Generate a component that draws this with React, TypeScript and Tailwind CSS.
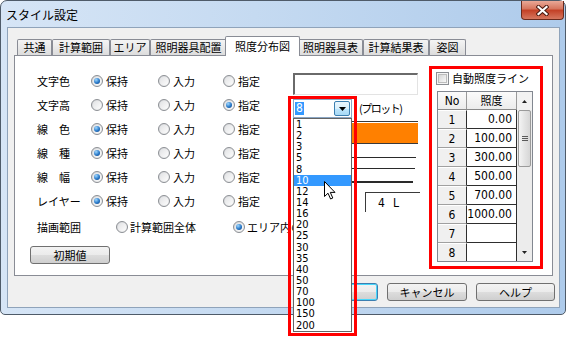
import React from "react";

const Radio = ({ on }: { on?: boolean }) => (
  <span className="relative inline-block w-[12px] h-[12px] shrink-0 rounded-full border border-[#8c8f94] bg-[linear-gradient(135deg,#d4d6d9,#f7f7f7)]">
    <span className="absolute inset-[1px] rounded-full bg-[linear-gradient(135deg,#e2e3e5,#fcfcfc)]" />
    {on && (
      <span className="absolute left-[2px] top-[2px] w-[6px] h-[6px] rounded-full bg-[radial-gradient(circle_at_35%_30%,#9fd8ff,#2878c8_55%,#0e3f7c)]" />
    )}
  </span>
);

const Checkbox = () => (
  <span className="relative inline-block w-[13px] h-[13px] shrink-0 border border-[#8c8f94] bg-[#f4f4f4]">
    <span className="absolute inset-[1px] border border-[#bdbdbd] bg-[linear-gradient(135deg,#d6d6d6,#f8f8f8)]" />
  </span>
);

const Btn = ({ children, className }: { children?: React.ReactNode; className: string }) => (
  <div
    className={
      "h-[18px] rounded-[3px] border bg-[linear-gradient(#f3f3f3_0%,#ebebeb_50%,#dddddd_51%,#cfcfcf_100%)] flex items-center justify-center text-[11px] leading-none " +
      className
    }
  >
    {children}
  </div>
);

const tabs: [string, string][] = [
  ["共通", "w-[35px]"],
  ["計算範囲", "w-[58px]"],
  ["エリア", "w-[40px]"],
  ["照明器具配置", "w-[77px]"],
  ["照度分布図", "SEL"],
  ["照明器具表", "w-[65px]"],
  ["計算結果表", "w-[66px]"],
  ["姿図", "w-[37px]"],
];

const rows: [string, number][] = [
  ["文字色", 0],
  ["文字高", 2],
  ["線　色", 0],
  ["線　種", 0],
  ["線　幅", 0],
  ["レイヤー", 0],
];

const sizes = ["1", "2", "3", "5", "8", "10", "12", "14", "16", "20", "25", "30", "35", "40", "50", "70", "100", "150", "200"];

const table: [string, string][] = [
  ["1", "0.00"],
  ["2", "100.00"],
  ["3", "300.00"],
  ["4", "500.00"],
  ["5", "700.00"],
  ["6", "1000.00"],
  ["7", ""],
  ["8", ""],
];

const opts = ["保持", "入力", "指定"];

function ComboWithDropdown() {
  return (
    <div className="relative w-[59px] h-[19px] shrink-0 border border-[#8aa6c4] bg-white flex items-center">
      <span className="ml-[1px] bg-[#3399ff] text-white px-[1px] h-[13px] leading-[13px] text-[12px] font-['Liberation_Sans_Narrow','DejaVu_Sans_Condensed',sans-serif]">
        8
      </span>
      <div className="ml-auto mr-[1px] w-[16px] h-[15px] rounded-[2px] border border-[#3c7fb1] bg-[linear-gradient(#eaf6fd,#d9f0fc_50%,#bee6fd_51%,#a7d9f5)] flex items-center justify-center">
        <svg width="7" height="4" viewBox="0 0 7 4">
          <path d="M0 0 H7 L3.5 4 Z" fill="#000" />
        </svg>
      </div>
      <div className="absolute left-[-1px] top-[18px] w-[59px] h-[214px] border border-[#646464] bg-white z-20 flex flex-col font-['Liberation_Sans_Narrow','DejaVu_Sans_Condensed',sans-serif] text-[11px]">
        {sizes.map((s) => (
          <div
            key={s}
            className={
              s === "10"
                ? "h-[11.15px] leading-[11.15px] pl-[2px] bg-[#3399ff] text-white"
                : "h-[11.15px] leading-[11.15px] pl-[2px] text-black"
            }
          >
            {s}
          </div>
        ))}
      </div>
      <div className="absolute left-[-6px] top-[-4px] w-[69px] h-[240px] border-[3px] border-[#ff0000] z-30 pointer-events-none" />
      <svg className="absolute left-[30px] top-[81px] z-40" width="12" height="19" viewBox="0 0 12 19">
        <path d="M0.5 0.5 L0.5 15.5 L4 12.2 L6.6 18 L8.8 17 L6.3 11.4 L11 11.4 Z" fill="#fff" stroke="#000" strokeWidth="1" strokeLinejoin="miter" />
      </svg>
    </div>
  );
}

export default function App() {
  return (
    <div className="w-[570px] h-[350px] bg-white font-['Noto_Sans_CJK_JP',sans-serif] text-[11px] text-black leading-none">
      <div className="w-[566px] h-[315px] rounded-t-[7px] rounded-b-[5px] border border-[#4f5b69] bg-[linear-gradient(to_right,#d6e5f6,#c5daf1_45%,#aecbeb)] flex flex-col">
        {/* title bar */}
        <div className="h-[26px] flex items-start justify-between">
          <div className="pl-[5px] pt-[6px] text-[12px] leading-[16px] text-black">スタイル設定</div>
          <div className="mr-[1px] w-[43px] h-[19px] rounded-b-[4px] border border-t-0 border-[#6b2a1c] bg-[linear-gradient(#e9a897,#d5735b_45%,#c33f24_50%,#d6775f)] flex items-center justify-center">
            <svg width="13" height="11" viewBox="0 0 13 11">
              <path d="M2.5 2 L10.5 9 M10.5 2 L2.5 9" stroke="#4a1a10" strokeWidth="4.2" strokeLinecap="square" />
              <path d="M2.5 2 L10.5 9 M10.5 2 L2.5 9" stroke="#fff" strokeWidth="2.2" strokeLinecap="square" />
            </svg>
          </div>
        </div>

        {/* client area */}
        <div className="ml-[6px] w-[553px] h-[281px] border border-[#8fa3ba] bg-[#f0f0f0] flex flex-col">
          {/* tabs */}
          <div className="ml-[9px] mt-[8px] h-[19px] flex items-end">
            {tabs.map(([t, w]) =>
              w === "SEL" ? (
                <div
                  key={t}
                  className="relative z-10 w-[75px] -mx-[2px] -mb-px h-[20px] border border-b-0 border-[#898c95] rounded-t-[2px] bg-white flex items-center justify-center pb-[1px]"
                >
                  {t}
                </div>
              ) : (
                <div
                  key={t}
                  className={
                    "h-[16px] border border-b-0 border-[#898c95] rounded-t-[2px] bg-[linear-gradient(#f4f4f4,#e9e9e9_50%,#dcdcdc)] flex items-center justify-center " +
                    w
                  }
                >
                  {t}
                </div>
              )
            )}
          </div>

          {/* panel */}
          <div className="relative ml-[6px] w-[539px] h-[221px] border border-[#898c95] bg-white flex">
            <div className="pl-[22px] pt-[13px] flex flex-col">
              <div className="flex">
                <div className="grid grid-cols-[54px_67px_65px_70px] auto-rows-[24px]">
                  {rows.map(([label, sel]) => (
                    <React.Fragment key={label}>
                      <div className="flex items-center whitespace-pre">{label}</div>
                      {opts.map((o, i) => (
                        <div key={o} className="flex items-center">
                          <Radio on={i === sel} />
                          <span className="ml-[3px]">{o}</span>
                        </div>
                      ))}
                    </React.Fragment>
                  ))}
                </div>
                <div className="w-[125px] flex flex-col">
                  <div className="mt-[4px] h-[22px] border-t-2 border-l-2 border-t-[#6a6a6a] border-l-[#6a6a6a] border-r border-b border-r-[#e3e3e3] border-b-[#e3e3e3] bg-white" />
                  <div className="mt-[4px] h-[19px] flex items-center">
                    <ComboWithDropdown />
                    <span className="ml-[7px] tracking-[-1.5px] whitespace-nowrap">(プロット)</span>
                  </div>
                  <div className="mt-[3px] h-[23px] border-t border-b border-[#3a3a3a] pt-px">
                    <div className="h-[20px] bg-[#ff8000]" />
                  </div>
                  <div className="mt-[13px] h-px w-[123px] bg-[#2a2a2a]" />
                  <div className="mt-[10px] h-px w-[122px] bg-[#2a2a2a]" />
                  <div className="mt-[12px] h-[2px] w-[120px] bg-[#2a2a2a]" />
                  <div className="mt-[9px] ml-[72px] w-[55px] h-[20px] border-t border-l border-[#3a3a3a] flex items-center pl-[12px] gap-[8px] font-['Liberation_Sans_Narrow','DejaVu_Sans_Condensed',sans-serif] text-[12px]">
                    <span>4</span>
                    <span>L</span>
                  </div>
                </div>
              </div>

              <div className="mt-[2px] h-[24px] flex items-center whitespace-nowrap">
                <span className="w-[79px]">描画範囲</span>
                <Radio />
                <span className="ml-[2px] w-[103px]">計算範囲全体</span>
                <Radio on />
                <span className="ml-[2px]">エリア内のみ</span>
              </div>

              <Btn className="mt-[7px] -ml-[7px] w-[80px] border-[#707070]">初期値</Btn>
            </div>

            {/* right: auto illuminance lines */}
            <div className="ml-auto mr-[9px] mt-[10px] w-[114px] h-[203px] border-[3px] border-[#ff0000] flex flex-col">
              <div className="mt-[3px] ml-[4px] h-[13px] flex items-center">
                <Checkbox />
                <span className="ml-[3px] whitespace-nowrap">自動照度ライン</span>
              </div>
              <div className="mt-[6px] ml-[5px] w-[96px] h-[171px] border border-[#828790] flex overflow-hidden">
                <div className="w-[79px] flex flex-col">
                  <div className="h-[18px] flex shrink-0 bg-[linear-gradient(#fbfbfb,#ececec)] border-b border-[#8a8a8a]">
                    <div className="w-[29px] border-r border-[#9a9a9a] flex items-center justify-center font-['Liberation_Sans_Narrow','DejaVu_Sans_Condensed',sans-serif] text-[12px]">
                      No
                    </div>
                    <div className="w-[50px] border-r border-[#9a9a9a] flex items-center justify-center">照度</div>
                  </div>
                  {table.map(([n, v]) => (
                    <div key={n} className="h-[19px] flex shrink-0 font-['Liberation_Sans_Narrow','DejaVu_Sans_Condensed',sans-serif] text-[12px]">
                      <div className="w-[29px] bg-[#f0f0f0] border-t border-t-white border-b border-b-[#a0a0a0] border-r border-r-[#2e2e2e] flex items-center justify-center">
                        {n}
                      </div>
                      <div className="w-[50px] bg-white border-b border-b-[#2e2e2e] border-r border-r-[#2e2e2e] flex items-center justify-end pr-[4px]">
                        {v}
                      </div>
                    </div>
                  ))}
                </div>
                <div className="w-[15px] flex flex-col bg-[#ececec]">
                  <div className="h-[18px] shrink-0 flex items-center justify-center bg-[#f2f2f2]">
                    <svg width="5" height="3" viewBox="0 0 5 3">
                      <path d="M0 3 L2.5 0 L5 3 Z" fill="#222" />
                    </svg>
                  </div>
                  <div className="mx-[1px] h-[57px] shrink-0 rounded-[2px] border border-[#9a9a9a] bg-[linear-gradient(to_right,#f4f4f4,#e4e4e4_50%,#d6d6d6)] flex flex-col items-center justify-center gap-[1px]">
                    <div className="w-[6px] h-px bg-[#5a5a5a]" />
                    <div className="w-[6px] h-px bg-[#5a5a5a]" />
                    <div className="w-[6px] h-px bg-[#5a5a5a]" />
                  </div>
                  <div className="flex-1" />
                  <div className="h-[17px] shrink-0 flex items-center justify-center">
                    <svg width="5" height="3" viewBox="0 0 5 3">
                      <path d="M0 0 L5 0 L2.5 3 Z" fill="#222" />
                    </svg>
                  </div>
                </div>
              </div>
            </div>
          </div>

          {/* bottom buttons */}
          <div className="mt-[7px] pr-[4px] flex justify-end gap-[9px]">
            <Btn className="w-[79px] border-[#3c7fb1] shadow-[inset_0_0_0_1px_#48d7fb]">OK</Btn>
            <Btn className="w-[80px] border-[#707070]">キャンセル</Btn>
            <Btn className="w-[79px] border-[#707070]">ヘルプ</Btn>
          </div>
        </div>
      </div>
    </div>
  );
}
